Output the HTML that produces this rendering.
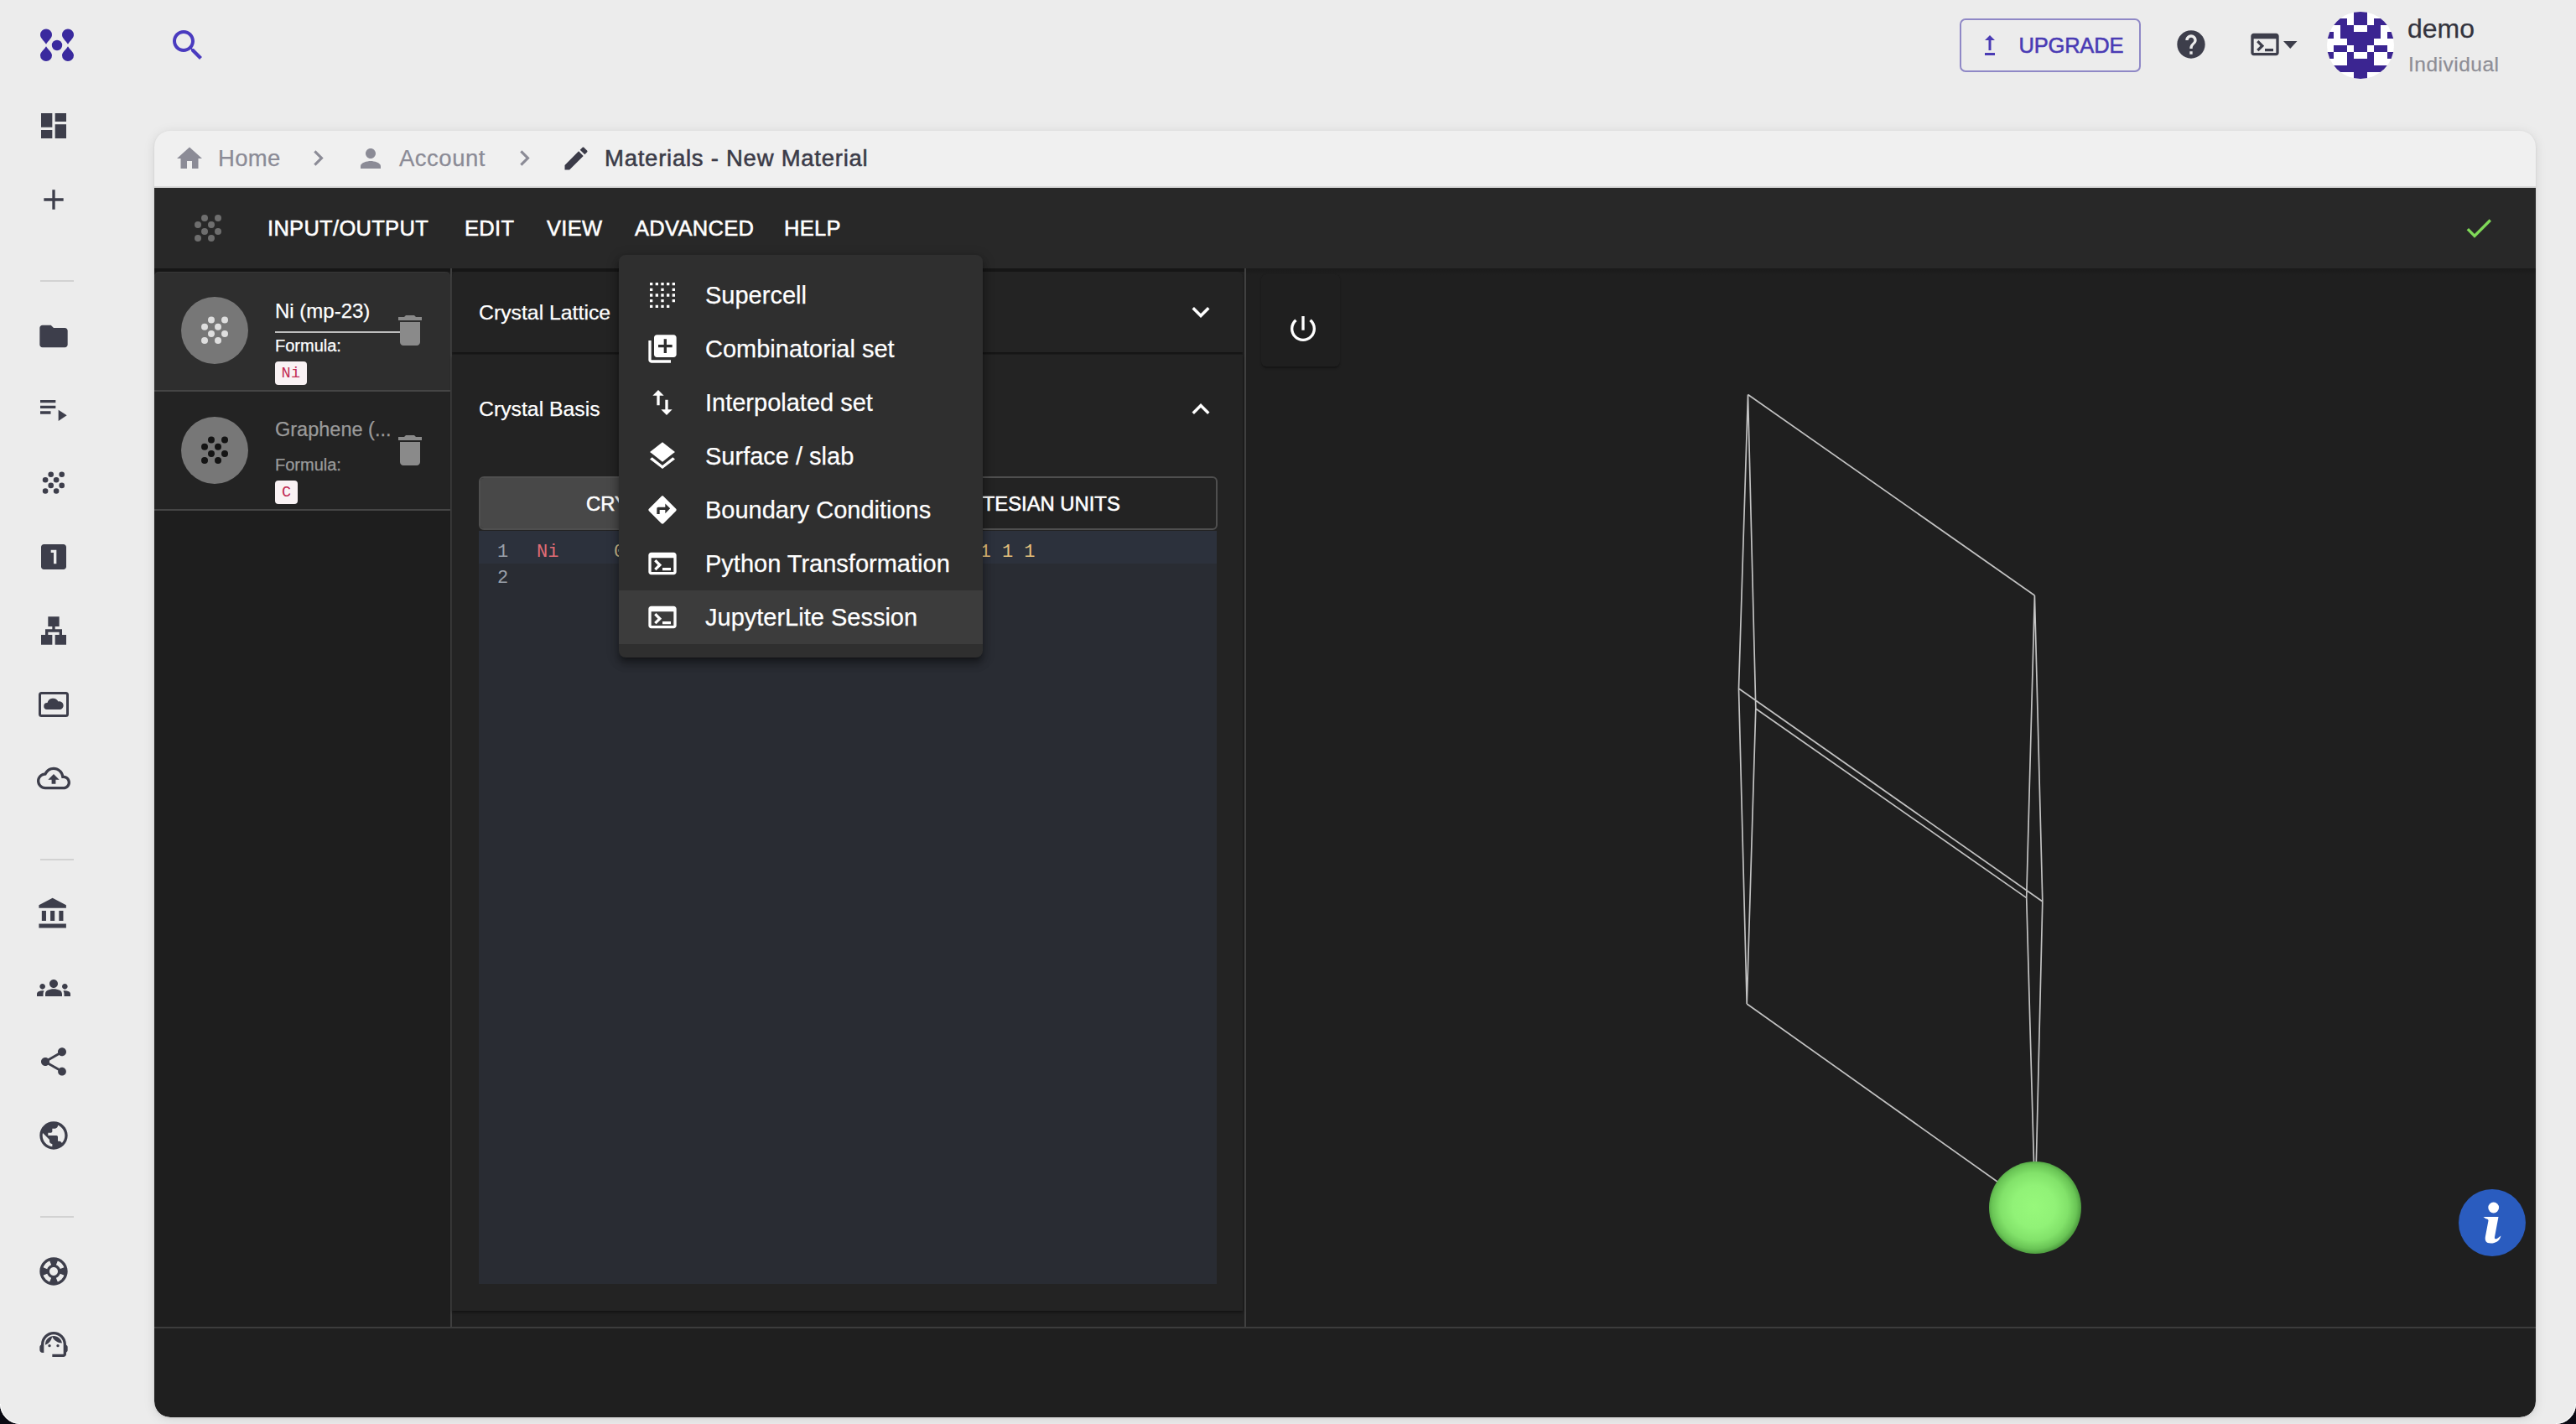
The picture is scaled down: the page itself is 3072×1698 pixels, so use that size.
<!DOCTYPE html>
<html><head><meta charset="utf-8">
<style>
*{box-sizing:border-box;margin:0;padding:0}
html,body{width:3072px;height:1698px;overflow:hidden;background:#ececec;font-family:"Liberation Sans",sans-serif;position:relative}
.a{position:absolute}
svg{position:absolute;display:block;overflow:visible}
.ni{fill:#3d3e4b}
.t{position:absolute;white-space:pre;line-height:1}
.mono{font-family:"Liberation Mono",monospace}
.m{-webkit-text-stroke:0.55px currentColor}
.r{-webkit-text-stroke:0.25px currentColor}
</style></head>
<body>

<!-- ============ LEFT NAV ============ -->
<!-- logo -->
<svg class="a" style="left:0;top:0" width="120" height="100" viewBox="0 0 120 100">
  <g fill="#3a2a9e">
    <path d="M55 52.8 C52 48 48 45.5 48 41.5 A7 7 0 0 1 62 41.5 C62 45.5 58 48 55 52.8Z"/>
    <path d="M55 55.3 C52 60 48 62.5 48 66 A7 7 0 0 0 62 66 C62 62.5 58 60 55 55.3Z"/>
    <path d="M81 52.8 C78 48 74 45.5 74 41.5 A7 7 0 0 1 88 41.5 C88 45.5 84 48 81 52.8Z"/>
    <path d="M81 55.3 C78 60 74 62.5 74 66 A7 7 0 0 0 88 66 C88 62.5 84 60 81 55.3Z"/>
    <circle cx="68" cy="54" r="6.2"/>
  </g>
</svg>
<!-- dashboard -->
<svg style="left:44px;top:130px" width="40" height="40" viewBox="0 0 24 24"><path class="ni" d="M3 13h8V3H3v10zm0 8h8v-6H3v6zm10 0h8V11h-8v10zm0-18v6h8V3h-8z"/></svg>
<!-- add -->
<svg style="left:44px;top:218px" width="40" height="40" viewBox="0 0 24 24"><path class="ni" d="M19 13h-6v6h-2v-6H5v-2h6V5h2v6h6v2z"/></svg>
<div class="a" style="left:48px;top:334px;width:40px;height:2px;background:#d2d2d2"></div>
<!-- folder -->
<svg style="left:44px;top:380.5px" width="40" height="40" viewBox="0 0 24 24"><path class="ni" d="M10 4H4c-1.1 0-1.99.9-1.99 2L2 18c0 1.1.9 2 2 2h16c1.1 0 2-.9 2-2V8c0-1.1-.9-2-2-2h-8l-2-2z"/></svg>
<!-- playlist play -->
<svg style="left:43.4px;top:467.4px" width="40" height="40" viewBox="0 0 24 24"><path class="ni" d="M3 6h11v2H3zm0 4h11v2H3zm0 4h7.5v2H3zm13-1v8l6-4z"/></svg>
<!-- dots -->
<svg style="left:0;top:0" width="100" height="600"><g class="ni">
  <circle cx="60.7" cy="565.8" r="3.3"/><circle cx="73.7" cy="565.8" r="3.3"/>
  <circle cx="54.1" cy="572.3" r="3.3"/><circle cx="67.1" cy="572.3" r="3.3"/>
  <circle cx="60.7" cy="578.9" r="3.3"/><circle cx="73.7" cy="578.9" r="3.3"/>
  <circle cx="54.1" cy="585.5" r="3.3"/><circle cx="67.1" cy="585.5" r="3.3"/>
</g></svg>
<!-- looks one -->
<svg style="left:44px;top:644px" width="40" height="40" viewBox="0 0 24 24"><path class="ni" d="M19 3H5c-1.1 0-2 .9-2 2v14c0 1.1.9 2 2 2h14c1.1 0 2-.9 2-2V5c0-1.1-.9-2-2-2zm-5 14h-2V9h-2V7h4v10z"/></svg>
<!-- lan -->
<svg style="left:44px;top:732px" width="40" height="40" viewBox="0 0 24 24"><path class="ni" d="M13 22h8v-7h-3v-4h-5V9h3V2H8v7h3v2H6v4H3v7h8v-7H8v-2h8v2h-3z"/></svg>
<!-- cloud in box -->
<svg style="left:0;top:0" width="100" height="900"><g>
  <rect x="47.5" y="826.5" width="33" height="27" rx="2" fill="none" stroke="#3d3e4b" stroke-width="3"/>
  <path class="ni" d="M56 846 a4 4 0 0 1 0.5 -8 a7 7 0 0 1 13 -1.5 a4.8 4.8 0 0 1 2.5 9.5z"/>
</g></svg>
<!-- cloud upload outlined -->
<svg style="left:44px;top:908px" width="40" height="40" viewBox="0 0 24 24"><path class="ni" d="M19.35 10.04C18.67 6.59 15.64 4 12 4 9.11 4 6.6 5.64 5.35 8.04 2.34 8.36 0 10.91 0 14c0 3.31 2.69 6 6 6h13c2.76 0 5-2.24 5-5 0-2.64-2.05-4.78-4.65-4.96zM19 18H6c-2.21 0-4-1.79-4-4 0-2.05 1.53-3.76 3.56-3.97l1.07-.11.5-.95C8.08 7.14 9.94 6 12 6c2.62 0 4.88 1.86 5.39 4.43l.3 1.5 1.53.11c1.56.1 2.78 1.41 2.78 2.96 0 1.65-1.35 3-3 3zM8 13h2.55v3h2.9v-3H16l-4-4z"/></svg>
<div class="a" style="left:48px;top:1024px;width:40px;height:2px;background:#d2d2d2"></div>
<!-- bank -->
<svg style="left:43px;top:1069px" width="41" height="41" viewBox="0 0 24 24"><path class="ni" d="M4 10v7h3v-7H4zm6 0v7h3v-7h-3zM2 22h19v-3H2v3zm14-12v7h3v-7h-3zm-4.5-9L2 6v2h19V6l-9.5-5z"/></svg>
<!-- groups -->
<svg style="left:44px;top:1158px" width="40" height="40" viewBox="0 0 24 24"><path class="ni" d="M12 12.75c1.63 0 3.07.39 4.24.9 1.08.48 1.76 1.56 1.76 2.73V18H6v-1.61c0-1.18.68-2.26 1.76-2.73 1.17-.52 2.61-.91 4.24-.91zM4 13c1.1 0 2-.9 2-2s-.9-2-2-2-2 .9-2 2 .9 2 2 2zm1.13 1.1c-.37-.06-.74-.1-1.13-.1-.99 0-1.930.21-2.78.58C.48 14.9 0 15.62 0 16.43V18h4.5v-1.61c0-.83.23-1.61.63-2.29zM20 13c1.1 0 2-.9 2-2s-.9-2-2-2-2 .9-2 2 .9 2 2 2zm4 3.43c0-.81-.48-1.53-1.22-1.85-.85-.37-1.79-.58-2.78-.58-.39 0-.76.04-1.13.1.4.68.63 1.46.63 2.29V18H24v-1.57zM12 6c1.66 0 3 1.34 3 3s-1.340 3-3 3-3-1.34-3-3 1.34-3 3-3z"/></svg>
<!-- share -->
<svg style="left:44px;top:1246px" width="40" height="40" viewBox="0 0 24 24"><path class="ni" d="M18 16.08c-.76 0-1.44.3-1.96.77L8.91 12.7c.05-.23.09-.46.09-.7s-.04-.47-.09-.7l7.05-4.11c.54.5 1.25.81 2.04.81 1.66 0 3-1.34 3-3s-1.34-3-3-3-3 1.34-3 3c0 .24.04.47.09.7L8.04 9.81C7.5 9.31 6.79 9 6 9c-1.66 0-3 1.34-3 3s1.34 3 3 3c.79 0 1.5-.31 2.04-.81l7.12 4.16c-.05.21-.08.43-.08.65 0 1.61 1.31 2.92 2.92 2.92 1.61 0 2.92-1.31 2.92-2.92s-1.31-2.92-2.92-2.92z"/></svg>
<!-- public -->
<svg style="left:44px;top:1334px" width="40" height="40" viewBox="0 0 24 24"><path class="ni" d="M12 2C6.48 2 2 6.48 2 12s4.48 10 10 10 10-4.48 10-10S17.520 2 12 2zm-1 17.93c-3.95-.49-7-3.85-7-7.93 0-.62.08-1.21.21-1.79L9 15v1c0 1.1.9 2 2 2v1.93zm6.9-2.54c-.26-.81-1-1.39-1.9-1.39h-1v-3c0-.55-.45-1-1-1H8v-2h2c.55 0 1-.45 1-1V7h2c1.1 0 2-.9 2-2v-.41c2.93 1.19 5 4.06 5 7.41 0 2.08-.8 3.97-2.1 5.39z"/></svg>
<div class="a" style="left:48px;top:1450px;width:40px;height:2px;background:#d2d2d2"></div>
<!-- support -->
<svg style="left:44px;top:1496px" width="40" height="40" viewBox="0 0 24 24"><path class="ni" d="M12 2C6.48 2 2 6.48 2 12s4.48 10 10 10 10-4.48 10-10S17.52 2 12 2zm7.46 7.12l-2.78 1.15c-.51-1.36-1.58-2.44-2.95-2.94l1.15-2.78c2.1.8 3.77 2.47 4.58 4.57zM12 15c-1.66 0-3-1.34-3-3s1.34-3 3-3 3 1.34 3 3-1.34 3-3 3zM9.13 4.54l1.170 2.78c-1.38.5-2.47 1.59-2.98 2.97L4.54 9.13c.81-2.11 2.48-3.78 4.59-4.59zM4.54 14.87l2.78-1.15c.51 1.38 1.59 2.46 2.97 2.96l-1.17 2.78c-2.1-.81-3.77-2.48-4.58-4.59zm10.34 4.59l-1.15-2.78c1.37-.51 2.45-1.59 2.95-2.97l2.78 1.17c-.81 2.1-2.48 3.77-4.58 4.58z"/></svg>
<!-- support agent -->
<svg style="left:44px;top:1583px" width="40" height="40" viewBox="0 0 24 24"><g class="ni"><path d="M21 12.22C21 6.73 16.74 3 12 3c-4.69 0-9 3.65-9 9.28-.6.34-1 .98-1 1.72v2c0 1.1.9 2 2 2h1v-6.1c0-3.87 3.13-7 7-7s7 3.13 7 7V19h-8v2h8c1.1 0 2-.9 2-2v-1.22c.59-.31 1-.92 1-1.54v-2.3c0-.62-.41-1.23-1-1.54z"/><circle cx="9" cy="13" r="1"/><circle cx="15" cy="13" r="1"/><path d="M18 11.03C17.52 8.18 15.04 6 12.05 6c-3.03 0-6.29 2.51-6.03 6.45 2.47-1.01 4.33-3.21 4.86-5.89 1.31 2.63 4 4.44 7.12 4.47z"/></g></svg>

<!-- ============ TOP BAR ============ -->
<svg style="left:200px;top:30px" width="48" height="48" viewBox="0 0 24 24"><path fill="#4a3bbf" d="M15.5 14h-.79l-.28-.27C15.41 12.59 16 11.11 16 9.5 16 5.91 13.09 3 9.5 3S3 5.91 3 9.5 5.91 16 9.5 16c1.61 0 3.09-.59 4.23-1.57l.27.28v.79l5 4.99L20.49 19l-4.99-5zm-6 0C7.01 14 5 11.99 5 9.5S7.01 5 9.5 5 14 7.01 14 9.5 11.99 14 9.5 14z"/></svg>

<div class="a" style="left:2337px;top:22px;width:216px;height:64px;border:2px solid #8f88c6;border-radius:7px"></div>
<svg style="left:2355px;top:36px" width="36" height="36" viewBox="0 0 24 24"><path fill="#4a3bb4" d="M16 18v2H8v-2h8zM11 7.99V16h2V7.99h3L12 4 8 7.99h3z"/></svg>
<div class="t m" style="left:2407.5px;top:41.5px;font-size:25.5px;color:#4a3bb4;letter-spacing:-0.2px">UPGRADE</div>

<svg style="left:2593px;top:33px" width="40" height="40" viewBox="0 0 24 24"><path fill="#3d3e4b" d="M12 2C6.48 2 2 6.48 2 12s4.48 10 10 10 10-4.48 10-10S17.52 2 12 2zm1 17h-2v-2h2v2zm2.07-7.75l-.9.92C13.45 12.9 13 13.5 13 15h-2v-.5c0-1.1.45-2.1 1.17-2.83l1.24-1.26c.37-.36.59-.86.59-1.41 0-1.1-.9-2-2-2s-2 .9-2 2H8c0-2.21 1.79-4 4-4s4 1.79 4 4c0 .88-.36 1.68-.93 2.25z"/></svg>
<svg style="left:2681px;top:33px" width="40" height="40" viewBox="0 0 24 24"><path fill="#3d3e4b" d="M20 4H4c-1.11 0-2 .9-2 2v12c0 1.1.89 2 2 2h16c1.1 0 2-.9 2-2V6c0-1.1-.89-2-2-2zm0 14H4V8h16v10zm-2-1h-6v-2h6v2zM7.5 17l-1.41-1.41L8.67 13l-2.59-2.59L7.5 9l4 4-4 4z"/></svg>
<svg style="left:2723px;top:49px" width="17" height="10" viewBox="0 0 17 10"><path fill="#3d3e4b" d="M0 0h16.5L8.25 9z"/></svg>

<!-- identicon -->
<div class="a" style="left:2775px;top:14px;width:80px;height:80px;border-radius:50%;overflow:hidden;background:#fff">
<svg style="left:0;top:0" width="80" height="80" viewBox="0 0 80 80"><g fill="#3b2591"><rect x="32" y="0" width="16" height="8"/><rect x="8" y="8" width="16" height="8"/><rect x="32" y="8" width="16" height="8"/><rect x="56" y="8" width="16" height="8"/><rect x="16" y="16" width="16" height="8"/><rect x="48" y="16" width="16" height="8"/><rect x="0" y="24" width="8" height="8"/><rect x="16" y="24" width="48" height="8"/><rect x="72" y="24" width="8" height="8"/><rect x="24" y="32" width="32" height="8"/><rect x="8" y="40" width="16" height="8"/><rect x="32" y="40" width="16" height="8"/><rect x="56" y="40" width="16" height="8"/><rect x="0" y="48" width="8" height="8"/><rect x="24" y="48" width="8" height="8"/><rect x="48" y="48" width="8" height="8"/><rect x="72" y="48" width="8" height="8"/><rect x="24" y="56" width="32" height="8"/><rect x="8" y="64" width="64" height="8"/><rect x="32" y="72" width="16" height="8"/></g></svg>
</div>
<div class="t r" style="left:2871px;top:17.6px;font-size:32px;color:#34343e">demo</div>
<div class="t r" style="left:2872px;top:65px;font-size:24.5px;color:#8e8e96;letter-spacing:0.5px">Individual</div>

<!-- ============ CARD ============ -->
<div class="a" style="left:184px;top:156px;width:2840px;height:1534px;border-radius:19px;background:#f0f0f0;box-shadow:0 1px 3px rgba(0,0,0,.08),0 2px 14px rgba(0,0,0,.10);overflow:hidden">
  <div class="a" style="left:0;top:68px;width:2840px;height:1466px;background:#1f1f1f;border-radius:0 0 19px 19px"></div>
  <div class="a" style="left:0;top:66px;width:2840px;height:2px;background:#d9d9d9"></div>
  <div class="a" style="left:0;top:68px;width:2840px;height:96px;background:#282828"></div>
  <div class="a" style="left:0;top:164px;width:1302px;height:4px;background:#161616"></div>
  <div class="a" style="left:1302px;top:164px;width:1538px;height:8px;background:linear-gradient(#1a1a1a,#1f1f1f)"></div>
</div>

<!-- breadcrumb -->
<svg style="left:208px;top:171px" width="36" height="36" viewBox="0 0 24 24"><path fill="#8b8b96" d="M10 20v-6h4v6h5v-8h3L12 3 2 12h3v8z"/></svg>
<div class="t r" style="left:260px;top:175.3px;font-size:27.5px;color:#8b8b96;letter-spacing:0.3px">Home</div>
<svg style="left:361px;top:170px" width="37" height="37" viewBox="0 0 24 24"><path fill="#8b8b96" d="M10 6L8.59 7.41 13.17 12l-4.58 4.59L10 18l6-6z"/></svg>
<svg style="left:424px;top:171px" width="36" height="36" viewBox="0 0 24 24"><path fill="#8b8b96" d="M12 12c2.21 0 4-1.79 4-4s-1.79-4-4-4-4 1.79-4 4 1.79 4 4 4zm0 2c-2.67 0-8 1.34-8 4v2h16v-2c0-2.66-5.33-4-8-4z"/></svg>
<div class="t r" style="left:476px;top:175.3px;font-size:27.5px;color:#8b8b96;letter-spacing:0.5px">Account</div>
<svg style="left:607px;top:170px" width="37" height="37" viewBox="0 0 24 24"><path fill="#8b8b96" d="M10 6L8.59 7.41 13.17 12l-4.58 4.59L10 18l6-6z"/></svg>
<svg style="left:669px;top:171px" width="36" height="36" viewBox="0 0 24 24"><path fill="#3b3b48" d="M3 17.25V21h3.75L17.81 9.94l-3.75-3.75L3 17.25zM20.71 7.04c.39-.39.39-1.02 0-1.41l-2.34-2.34c-.39-.39-1.02-.39-1.41 0l-1.83 1.83 3.750 3.75 1.83-1.83z"/></svg>
<div class="t m" style="left:721px;top:175.3px;font-size:27.5px;color:#3b3b48;letter-spacing:0.75px">Materials - New Material</div>

<!-- toolbar -->
<svg style="left:0;top:0" width="300" height="300"><g fill="#6e6e6e">
  <circle cx="244" cy="260" r="4"/><circle cx="260" cy="260" r="4"/>
  <circle cx="236" cy="268" r="4"/><circle cx="252" cy="268" r="4"/>
  <circle cx="244" cy="276" r="4"/><circle cx="260" cy="276" r="4"/>
  <circle cx="236" cy="284" r="4"/><circle cx="252" cy="284" r="4"/>
</g></svg>
<div class="t m" style="left:319px;top:260.4px;font-size:25.5px;color:#fff;letter-spacing:0.3px">INPUT/OUTPUT</div>
<div class="t m" style="left:554px;top:260.4px;font-size:25.5px;color:#fff;letter-spacing:0.3px">EDIT</div>
<div class="t m" style="left:652px;top:260.4px;font-size:25.5px;color:#fff;letter-spacing:0.3px">VIEW</div>
<div class="t m" style="left:757px;top:260.4px;font-size:25.5px;color:#fff;letter-spacing:0.3px">ADVANCED</div>
<div class="t m" style="left:935px;top:260.4px;font-size:25.5px;color:#fff;letter-spacing:0.3px">HELP</div>
<svg style="left:2936px;top:252px" width="40" height="40" viewBox="0 0 24 24"><path fill="#7fd858" d="M9 16.17L4.83 12l-1.42 1.41L9 19 21 7l-1.41-1.41z"/></svg>

<!-- ============ LEFT PANEL ============ -->
<div class="a" style="left:184px;top:324px;width:353px;height:1258px;background:#1e1e1e"></div>
<div class="a" style="left:537px;top:320px;width:2px;height:1262px;background:#3f3f3f"></div>
<div class="a" style="left:184px;top:324px;width:353px;height:141px;background:#2e2e2e;border-radius:6px 6px 0 0;box-shadow:inset 0 1px 0 #363636"></div>
<div class="a" style="left:184px;top:465px;width:353px;height:2px;background:#454545"></div>
<div class="a" style="left:184px;top:467px;width:353px;height:140px;background:#232323"></div>
<div class="a" style="left:184px;top:607px;width:353px;height:2px;background:#454545"></div>

<div class="a" style="left:216px;top:354px;width:80px;height:80px;border-radius:50%;background:#777"></div>
<svg style="left:0;top:0" width="300" height="600"><g fill="#dedede">
  <circle cx="252" cy="381.5" r="4"/><circle cx="268" cy="381.5" r="4"/>
  <circle cx="244" cy="389.7" r="4"/><circle cx="260" cy="389.7" r="4"/>
  <circle cx="252" cy="397.9" r="4"/><circle cx="268" cy="397.9" r="4"/>
  <circle cx="244" cy="406.1" r="4"/><circle cx="260" cy="406.1" r="4"/>
</g></svg>
<div class="a" style="left:216px;top:497px;width:80px;height:80px;border-radius:50%;background:#777"></div>
<svg style="left:0;top:0" width="300" height="600"><g fill="#141414">
  <circle cx="252" cy="524.5" r="4"/><circle cx="268" cy="524.5" r="4"/>
  <circle cx="244" cy="532.7" r="4"/><circle cx="260" cy="532.7" r="4"/>
  <circle cx="252" cy="540.9" r="4"/><circle cx="268" cy="540.9" r="4"/>
  <circle cx="244" cy="549.1" r="4"/><circle cx="260" cy="549.1" r="4"/>
</g></svg>

<div class="t r" style="left:328px;top:358.7px;font-size:24px;color:#fff">Ni (mp-23)</div>
<div class="a" style="left:328px;top:395px;width:149px;height:2px;background:#bdbdbd"></div>
<div class="t r" style="left:328px;top:402px;font-size:20px;color:#fff">Formula:</div>
<div class="a mono" style="left:328px;top:431px;width:38px;height:28px;background:#f9f2f4;border-radius:4px;color:#c12a52;font-size:18.5px;line-height:30px;text-align:center;letter-spacing:0.5px">Ni</div>
<svg style="left:465px;top:370px" width="48" height="48" viewBox="0 0 24 24"><path fill="#8a8a8a" d="M6 19c0 1.1.9 2 2 2h8c1.1 0 2-.9 2-2V7H6v12zM19 4h-3.5l-1-1h-5l-1 1H5v2h14V4z"/></svg>

<div class="t r" style="left:328px;top:500.7px;font-size:23.5px;color:#9b9b9b">Graphene (...</div>
<div class="t r" style="left:328px;top:544px;font-size:20px;color:#9b9b9b">Formula:</div>
<div class="a mono" style="left:328px;top:573px;width:27px;height:28px;background:#f9f2f4;border-radius:4px;color:#c12a52;font-size:18.5px;line-height:30px;text-align:center">C</div>
<svg style="left:465px;top:513px" width="48" height="48" viewBox="0 0 24 24"><path fill="#8a8a8a" d="M6 19c0 1.1.9 2 2 2h8c1.1 0 2-.9 2-2V7H6v12zM19 4h-3.5l-1-1h-5l-1 1H5v2h14V4z"/></svg>

<!-- ============ MIDDLE PANEL ============ -->
<div class="a" style="left:539px;top:324px;width:945px;height:1258px;background:#202020"></div>
<div class="a" style="left:1484px;top:320px;width:2px;height:1262px;background:#404040"></div>
<div class="a" style="left:539px;top:324px;width:943px;height:96px;background:#232323;border-radius:6px 6px 0 0;box-shadow:0 2px 2px rgba(0,0,0,.35)"></div>
<div class="a" style="left:539px;top:423px;width:943px;height:1140px;background:#232323;box-shadow:0 2px 3px rgba(0,0,0,.45)"></div>
<div class="t r" style="left:571px;top:360.5px;font-size:24.8px;color:#fff">Crystal Lattice</div>
<svg style="left:1411px;top:351px" width="42" height="42" viewBox="0 0 24 24"><path fill="#fff" d="M16.59 8.59L12 13.17 7.41 8.59 6 10l6 6 6-6z"/></svg>
<div class="t r" style="left:571px;top:476.2px;font-size:24.8px;color:#fff">Crystal Basis</div>
<svg style="left:1411px;top:467px" width="42" height="42" viewBox="0 0 24 24"><path fill="#fff" d="M12 8l-6 6 1.41 1.41L12 10.83l4.59 4.58L18 14z"/></svg>

<!-- toggle group -->
<div class="a" style="left:571px;top:568px;width:881px;height:64px;border:2px solid #4f4f4f;border-radius:6px;overflow:hidden">
  <div class="a" style="left:0;top:0;width:439px;height:60px;background:#484848;border-right:2px solid #4f4f4f"></div>
</div>
<div class="t m" style="left:699px;top:588.8px;font-size:23.8px;color:#fff;letter-spacing:0px">CRYSTAL UNITS</div>
<div class="t m" style="left:1122px;top:588.8px;font-size:23.8px;color:#fff;letter-spacing:0px">CARTESIAN UNITS</div>

<!-- editor -->
<div class="a" style="left:571px;top:633px;width:880px;height:898px;background:#292c33"></div>
<div class="a" style="left:571px;top:633px;width:880px;height:39px;background:#2c313c"></div>
<div class="t mono" style="left:593px;top:648px;font-size:22px;color:#9aa0aa">1</div>
<div class="t mono" style="left:593px;top:679px;font-size:22px;color:#9aa0aa">2</div>
<div class="t mono" style="left:640px;top:648px;font-size:22px;color:#e06c75">Ni</div>
<div class="t mono" style="left:732px;top:648px;font-size:22px;color:#d6c08e">0.000000000</div>
<div class="t mono" style="left:1168.5px;top:648px;font-size:22px;color:#e5c07b">1 1 1</div>

<!-- horizontal line -->
<div class="a" style="left:184px;top:1582px;width:2840px;height:2px;background:#3c3c3c"></div>

<!-- ============ RIGHT PANEL ============ -->
<div class="a" style="left:1504px;top:327px;width:94px;height:110px;background:#1f1f1f;border-radius:6px;box-shadow:0 3px 3px -1px rgba(0,0,0,.35),0 0 2px rgba(0,0,0,.12)"></div>
<svg style="left:1534px;top:372px" width="40" height="40" viewBox="0 0 24 24"><path fill="#fff" d="M13 3h-2v10h2V3zm4.83 2.17l-1.42 1.42C17.99 7.86 19 9.81 19 12c0 3.87-3.13 7-7 7s-7-3.13-7-7c0-2.19 1.01-4.14 2.58-5.42L6.17 5.17C4.23 6.82 3 9.26 3 12c0 4.97 4.03 9 9 9s9-4.030 9-9c0-2.74-1.23-5.18-3.17-6.83z"/></svg>

<svg style="left:0;top:0" width="3072" height="1698">
  <defs>
    <radialGradient id="sph" cx="49%" cy="49%" r="51%">
      <stop offset="0" stop-color="#97f87b"/>
      <stop offset="0.45" stop-color="#91f277"/>
      <stop offset="0.72" stop-color="#82e26a"/>
      <stop offset="0.9" stop-color="#69c455"/>
      <stop offset="1" stop-color="#4d9c3f"/>
    </radialGradient>
  </defs>
  <g stroke="#c2c2c2" stroke-width="1.7" fill="none" stroke-linejoin="round">
    <path d="M2084.5 470.5 L2426.4 710 M2084.5 470.5 L2073.5 821 L2083.2 1197 M2084.5 470.5 L2093.8 845 L2083.2 1197 M2426.4 710 L2416.7 1070.6 L2427 1441 M2426.4 710 L2435.8 1075 L2427 1441 M2073.5 821 L2435.8 1075 M2093.8 845 L2416.7 1070.6 M2083.2 1197 L2427 1441"/>
  </g>
  <circle cx="2427" cy="1440" r="55" fill="url(#sph)"/>
</svg>

<!-- info -->
<div class="a" style="left:2932px;top:1418px;width:80px;height:80px;border-radius:50%;background:#2a5cbf"></div>
<svg style="left:0;top:0" width="3072" height="1698"><g fill="#fff">
  <circle cx="2973.7" cy="1440" r="6.4"/>
  <path d="M2961.5 1451 L2979.5 1451 L2975 1475 C2974.6 1477.5 2976 1478 2978.5 1476.5 L2982.5 1473.5 C2981 1480 2976 1482.5 2970.5 1482.5 C2964.5 1482.5 2963 1479 2964 1474 L2967.5 1455.5 C2967.7 1454.3 2966.5 1453.6 2964.5 1453.3 Z"/>
</g></svg>

<!-- ============ MENU ============ -->
<div class="a" style="left:738px;top:304px;width:434px;height:480px;background:#2f2f2f;border-radius:8px;box-shadow:0 5px 5px -3px rgba(0,0,0,.3),0 8px 10px 1px rgba(0,0,0,.22),0 3px 14px 2px rgba(0,0,0,.18)"></div>
<div class="a" style="left:738px;top:704px;width:434px;height:64px;background:#3c3c3c"></div>
<svg style="left:770px;top:332px" width="40" height="40" viewBox="0 0 24 24"><path fill="#fff" d="M7 5h2V3H7v2zm0 8h2v-2H7v2zm0 8h2v-2H7v2zm4-4h2v-2h-2v2zm0 4h2v-2h-2v2zm-8 0h2v-2H3v2zm0-4h2v-2H3v2zm0-4h2v-2H3v2zm0-4h2V7H3v2zm0-4h2V3H3v2zm8 8h2v-2h-2v2zm8 4h2v-2h-2v2zm0-4h2v-2h-2v2zm0 4h2v-2h-2v2zm0-4h2v-2h-2v2zm0-4h2V7h-2v2zm0-4h2V3h-2v2zm-8 4h2V7h-2v2zm0-4h2V3h-2v2zm4 16h2v-2h-2v2zm0-16h2V3h-2v2zm0 8h2v-2h-2v2z"/></svg>
<svg style="left:770px;top:396px" width="40" height="40" viewBox="0 0 24 24"><path fill="#fff" d="M4 6H2v14c0 1.1.9 2 2 2h14v-2H4V6zm16-4H8c-1.1 0-2 .9-2 2v12c0 1.1.9 2 2 2h12c1.1 0 2-.9 2-2V4c0-1.1-.9-2-2-2zm-1 9h-4v4h-2v-4H9V9h4V5h2v4h4v2z"/></svg>
<svg style="left:770px;top:460px" width="40" height="40" viewBox="0 0 24 24"><path fill="#fff" d="M16 17.01V10h-2v7.01h-3L15 21l4-3.99h-3zM9 3L5 6.99h3V14h2V6.99h3L9 3z"/></svg>
<svg style="left:770px;top:524px" width="40" height="40" viewBox="0 0 24 24"><path fill="#fff" d="M11.99 18.54l-7.37-5.73L3 14.07l9 7 9-7-1.63-1.27-7.38 5.74zM12 16l7.36-5.73L21 9l-9-7-9 7 1.63 1.27L12 16z"/></svg>
<svg style="left:770px;top:588px" width="40" height="40" viewBox="0 0 24 24"><path fill="#fff" d="M21.71 11.29l-9-9c-.39-.39-1.02-.39-1.41 0l-9 9c-.39.39-.39 1.02 0 1.41l9 9c.39.39 1.02.39 1.41 0l9-9c.39-.38.39-1.01 0-1.41zM14 14.5V12h-4v3H8v-4c0-.55.45-1 1-1h5V7.5l3.5 3.5-3.5 3.5z"/></svg>
<svg style="left:770px;top:652px" width="40" height="40" viewBox="0 0 24 24"><path fill="#fff" d="M20 4H4c-1.11 0-2 .9-2 2v12c0 1.1.89 2 2 2h16c1.1 0 2-.9 2-2V6c0-1.1-.89-2-2-2zm0 14H4V8h16v10zm-2-1h-6v-2h6v2zM7.5 17l-1.41-1.41L8.67 13l-2.59-2.59L7.5 9l4 4-4 4z"/></svg>
<svg style="left:770px;top:716px" width="40" height="40" viewBox="0 0 24 24"><path fill="#fff" d="M20 4H4c-1.11 0-2 .9-2 2v12c0 1.1.89 2 2 2h16c1.1 0 2-.9 2-2V6c0-1.1-.89-2-2-2zm0 14H4V8h16v10zm-2-1h-6v-2h6v2zM7.5 17l-1.41-1.41L8.67 13l-2.59-2.59L7.5 9l4 4-4 4z"/></svg>
<div class="t r" style="left:841px;top:337.8px;font-size:29px;color:#fff">Supercell</div>
<div class="t r" style="left:841px;top:401.8px;font-size:29px;color:#fff">Combinatorial set</div>
<div class="t r" style="left:841px;top:465.8px;font-size:29px;color:#fff">Interpolated set</div>
<div class="t r" style="left:841px;top:529.8px;font-size:29px;color:#fff">Surface / slab</div>
<div class="t r" style="left:841px;top:593.8px;font-size:29px;color:#fff">Boundary Conditions</div>
<div class="t r" style="left:841px;top:657.8px;font-size:29px;color:#fff">Python Transformation</div>
<div class="t r" style="left:841px;top:721.8px;font-size:29px;color:#fff">JupyterLite Session</div>

<!-- window bottom corners -->
<svg style="left:0;top:1674px" width="24" height="24"><path d="M0 0 A24 24 0 0 0 24 24 L0 24Z" fill="#0b0b14"/><path d="M0.5 0 A23.5 23.5 0 0 0 24 23.5" fill="none" stroke="#fff" stroke-width="1"/></svg>
<svg style="left:3048px;top:1674px" width="24" height="24"><path d="M24 0 A24 24 0 0 1 0 24 L24 24Z" fill="#0b0b14"/><path d="M23.5 0 A23.5 23.5 0 0 1 0 23.5" fill="none" stroke="#fff" stroke-width="1"/></svg>
</body></html>
